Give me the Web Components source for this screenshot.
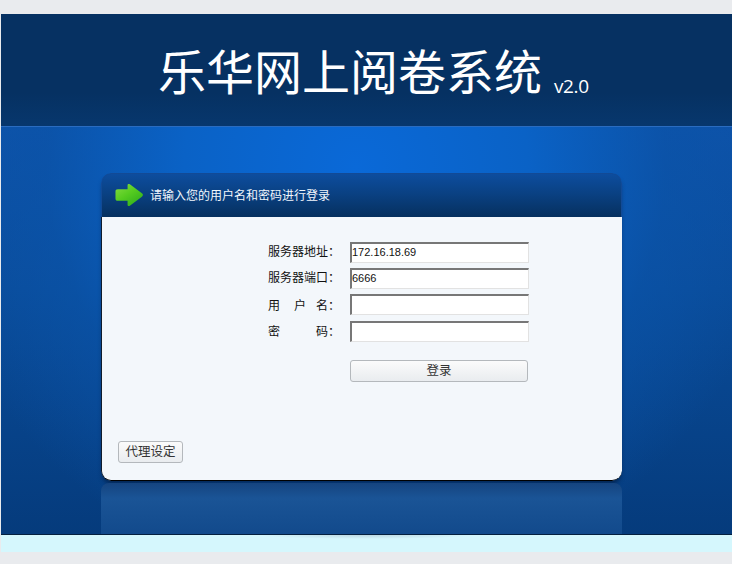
<!DOCTYPE html>
<html lang="zh">
<head>
<meta charset="utf-8">
<title>乐华网上阅卷系统</title>
<style>
  html, body { margin: 0; padding: 0; background: #e9ebee; }
  body { font-family: "Noto Sans CJK SC", "Liberation Sans", sans-serif; }
</style>
</head>
<body>
<login-page>
  <app-banner slot="banner" version="v2.0">乐华网上阅卷系统</app-banner>
  <login-card slot="card" hint="请输入您的用户名和密码进行登录">
    <field-row><span>服务器地址：</span><span slot="value">172.16.18.69</span></field-row>
    <field-row><span>服务器端口：</span><span slot="value">6666</span></field-row>
    <field-row low><span class="a">用</span><span class="b">户</span><span>名：</span></field-row>
    <field-row low last><span class="c">密</span><span>码：</span></field-row>
    <app-button slot="submit" wide>登录</app-button>
    <app-button slot="proxy">代理设定</app-button>
  </login-card>
</login-page>

<script>
class LoginPage extends HTMLElement {
    constructor() {
        super();
        this.attachShadow({mode: 'open'}).innerHTML = `
        <style>
            :host { display: block; width: 732px; height: 564px; box-sizing: border-box; padding: 14px 0 12px 1px; overflow: hidden; }
            .main {
                height: 409px;
                box-sizing: border-box;
                padding: 46px 0 0 100px;
                border-bottom: 1px solid #04203f;
                border-top: 1px solid #2a6cc0;
                background:
                  radial-gradient(ellipse 430px 420px at 355px 40px, #0a69d8 0%, #0a62c6 40%, rgba(10,84,170,.6) 72%, rgba(8,70,140,0) 100%),
                  linear-gradient(#0e52a8 0%, #0a4c9a 40%, #053b7c 100%);
            }
            .mirror {
                width: 521px;
                height: 51px;
                margin-top: 2px;
                border-radius: 8px 8px 0 0;
                background: linear-gradient(#15447f, #1a5496 30%, #124a8c);
            }
            .floor {
                height: 17px;
                background: radial-gradient(ellipse 110px 4px at 365px 0, #bcd8e2 0%, #d5f7fd 100%);
            }
        </style>
        <slot name="banner"></slot>
        <div class="main">
            <slot name="card"></slot>
            <div class="mirror"></div>
        </div>
        <div class="floor"></div>`;
    }
}

class AppBanner extends HTMLElement {
    constructor() {
        super();
        const version = this.getAttribute('version');
        this.attachShadow({mode: 'open'}).innerHTML = `
        <style>
            :host { display: block; height: 112px; box-sizing: border-box; white-space: nowrap;
                    padding: 27px 0 0 157px; color: #fff; background: linear-gradient(#063162 0%, #063162 70%, #07376d 100%); }
            .title { font: 400 48px/1.2 "Noto Sans CJK SC", sans-serif; }
            .ver { font: 400 19px "Open Sans", sans-serif; margin-left: 12px; letter-spacing: -.4px; vertical-align: -3px; }
        </style>
        <span class="title"><slot></slot></span><span class="ver">${version}</span>`;
    }
}

class LoginCard extends HTMLElement {
    constructor() {
        super();
        const hint = this.getAttribute('hint');
        this.attachShadow({mode: 'open'}).innerHTML = `
        <style>
            :host { display: block; width: 521px; height: 308px; border-radius: 10px; box-sizing: border-box;
                    box-shadow: 0 4px 5px -2px rgba(0,10,30,.6); overflow: hidden; font: 12px "Noto Sans CJK SC", sans-serif; }
            .head { display: flex; align-items: center; gap: 6px; height: 44px; box-sizing: border-box; padding: 0 0 2px 13px;
                    color: #f2f7fc; border: 1px solid #124a96; border-bottom: 0; border-radius: 10px 10px 0 0;
                    background: linear-gradient(#0d4d9e 0%, #0a4183 45%, #06305f 100%); }
            .body { position: relative; height: 264px; box-sizing: border-box; padding: 25px 0 0 166px;
                    background: #f3f7fb; border-left: 1px solid #101c2c; border-bottom: 1px solid #000; border-radius: 0 0 10px 10px; }
            .rows { display: flex; flex-direction: column; gap: 5px; }
            .submit { margin: 18px 0 0 82px; }
            .proxy { margin: 59px 0 0 -150px; }
            svg { display: block; }
        </style>
        <div class="head">
            <svg width="29" height="24" viewBox="0 0 30 24">
                <defs><linearGradient id="g" x1="0" y1="0" x2=".8" y2="1">
                    <stop offset="0" stop-color="#86dc44"/><stop offset=".5" stop-color="#56cc20"/><stop offset="1" stop-color="#2fae1c"/>
                </linearGradient></defs>
                <path d="M3 6H13V2C13 .6 14.2 .1 15.4 1L27.8 10.2C29.3 11.4 29.3 12.6 27.8 13.8L15.4 23C14.2 23.9 13 23.4 13 22V18H3C1.2 18 .5 17.2 .5 15.5V8.5C.5 6.8 1.2 6 3 6Z" fill="url(#g)"/>
            </svg>
            <span>${hint}</span>
        </div>
        <div class="body">
            <div class="rows"><slot></slot></div>
            <div class="submit"><slot name="submit"></slot></div>
            <div class="proxy"><slot name="proxy"></slot></div>
        </div>`;
    }
}

class FieldRow extends HTMLElement {
    constructor() {
        super();
        this.attachShadow({mode: 'open'}).innerHTML = `
        <style>
            :host { display: flex; align-items: center; gap: 16px; height: 21px; color: #111; font: 12px/21px "Noto Sans CJK SC", sans-serif; }
            :host([last]) { margin-top: 1px; }
            .label { display: block; width: 66px; white-space: nowrap; margin-top: -5px; }
            :host([low]) .label { margin-top: -1px; }
            :host([last]) .label { margin-top: -3px; }
            .box { width: 179px; height: 21px; box-sizing: border-box; background: #fff;
                   border-style: solid; border-width: 2px 1px 1px 2px; border-color: #777 #e2e2e2 #e2e2e2 #777;
                   font: 11px/16px "Liberation Sans", sans-serif; color: #111; }
        </style>
        <span class="label"><slot></slot></span>
        <div class="box"><slot name="value"></slot></div>`;
    }
    connectedCallback() {
        this.querySelectorAll('.a').forEach(e => e.style.marginRight = '14px');
        this.querySelectorAll('.b').forEach(e => e.style.marginRight = '10px');
        this.querySelectorAll('.c').forEach(e => e.style.marginRight = '36px');
    }
}

class AppButton extends HTMLElement {
    constructor() {
        super();
        this.attachShadow({mode: 'open'}).innerHTML = `
        <style>
            :host { display: block; width: 65px; height: 22px; box-sizing: border-box; border: 1px solid #b4b8bc; border-radius: 3px;
                    background: linear-gradient(#fbfbfb, #e9ecef); color: #333; text-align: center;
                    font: 12.5px/18px "Noto Sans CJK SC", sans-serif; }
            :host([wide]) { width: 178px; }
        </style>
        <slot></slot>`;
    }
}

customElements.define('login-page', LoginPage);
customElements.define('app-banner', AppBanner);
customElements.define('login-card', LoginCard);
customElements.define('field-row', FieldRow);
customElements.define('app-button', AppButton);
</script>
</body>
</html>
